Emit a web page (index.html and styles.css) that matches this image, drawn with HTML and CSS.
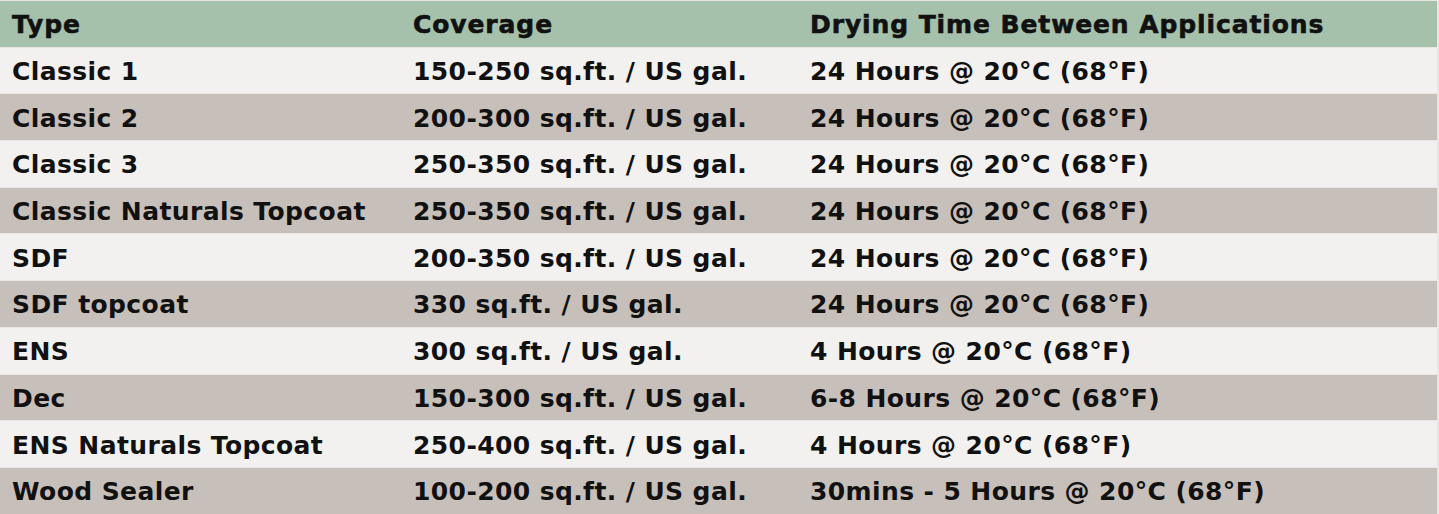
FILE: index.html
```html
<!DOCTYPE html>
<html>
<head>
<meta charset="utf-8">
<link rel="stylesheet" href="styles.css">
</head>
<body>
<div class="wrap">
<table class="spec">
  <thead>
    <tr class="head"><th class="c1">Type</th><th class="c2">Coverage</th><th class="c3">Drying Time Between Applications</th></tr>
  </thead>
  <tbody>
    <tr class="odd"><td>Classic 1</td><td>150-250 sq.ft. / US gal.</td><td>24 Hours @ 20°C (68°F)</td></tr>
    <tr class="even"><td>Classic 2</td><td>200-300 sq.ft. / US gal.</td><td>24 Hours @ 20°C (68°F)</td></tr>
    <tr class="odd"><td>Classic 3</td><td>250-350 sq.ft. / US gal.</td><td>24 Hours @ 20°C (68°F)</td></tr>
    <tr class="even"><td>Classic Naturals Topcoat</td><td>250-350 sq.ft. / US gal.</td><td>24 Hours @ 20°C (68°F)</td></tr>
    <tr class="odd"><td>SDF</td><td>200-350 sq.ft. / US gal.</td><td>24 Hours @ 20°C (68°F)</td></tr>
    <tr class="even"><td>SDF topcoat</td><td>330 sq.ft. / US gal.</td><td>24 Hours @ 20°C (68°F)</td></tr>
    <tr class="odd"><td>ENS</td><td>300 sq.ft. / US gal.</td><td>4 Hours @ 20°C (68°F)</td></tr>
    <tr class="even"><td>Dec</td><td>150-300 sq.ft. / US gal.</td><td>6-8 Hours @ 20°C (68°F)</td></tr>
    <tr class="odd"><td>ENS Naturals Topcoat</td><td>250-400 sq.ft. / US gal.</td><td>4 Hours @ 20°C (68°F)</td></tr>
    <tr class="even"><td>Wood Sealer</td><td>100-200 sq.ft. / US gal.</td><td>30mins - 5 Hours @ 20°C (68°F)</td></tr>
  </tbody>
</table>
</div>
</body>
</html>
```

FILE: styles.css
```css
html, body {
  margin: 0;
  padding: 0;
  background: #e9e6e3;
}
.wrap {
  width: 1437px;
  padding-top: 1px;
}
.spec {
  width: 1437px;
  border-collapse: collapse;
  table-layout: fixed;
  font-family: "DejaVu Sans", "Open Sans", sans-serif;
  color: #111;
}
.spec th, .spec td {
  height: 43.7px;
  padding: 2px 0 0 12px;
  text-align: left;
  vertical-align: middle;
  font-size: 25px;
  font-weight: 700;
  letter-spacing: 0.4px;
  white-space: nowrap;
  line-height: 1;
}
.spec th {
  letter-spacing: 0.9px;
  -webkit-text-stroke: 0.6px #111;
}
.c1 { width: 389px; }
.c2 { width: 385px; }
.spec tbody tr {
  border-top: 1px solid #e9e6e3;
}
.head { background: #a5c1ab; }
.odd { background: #f2f1ef; }
.even { background: #c7bfb9; }
```
